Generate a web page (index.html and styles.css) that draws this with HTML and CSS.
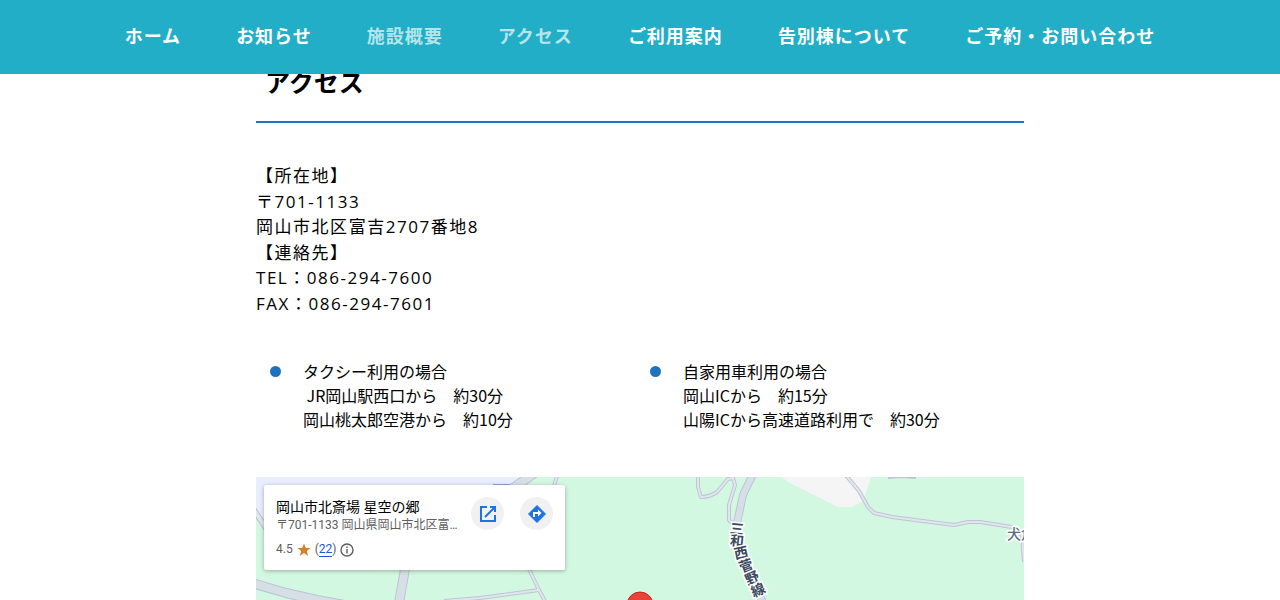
FILE: index.html
```html
<!DOCTYPE html>
<html lang="ja">
<head>
<meta charset="utf-8">
<meta name="viewport" content="width=device-width, initial-scale=1">
<title>アクセス</title>
<link rel="stylesheet" href="styles.css">
</head>
<body>
<header class="site-header">
  <nav class="nav">
    <a href="#home">ホーム</a>
    <a href="#news">お知らせ</a>
    <a href="#facility" class="is-dim">施設概要</a>
    <a href="#access" class="is-dim">アクセス</a>
    <a href="#guide">ご利用案内</a>
    <a href="#annex">告別棟について</a>
    <a href="#contact">ご予約・お問い合わせ</a>
  </nav>
</header>
<main class="page" id="access">
  <h2 class="title">アクセス</h2>
  <address class="contact">
    <p>【所在地】</p>
    <p>〒701-1133</p>
    <p>岡山市北区富吉2707番地8</p>
    <p>【連絡先】</p>
    <p>TEL：086-294-7600</p>
    <p>FAX：086-294-7601</p>
  </address>
  <ul class="routes">
    <li>タクシー利用の場合<br>&nbsp;JR岡山駅西口から　約30分<br>岡山桃太郎空港から　約10分</li>
    <li>自家用車利用の場合<br>岡山ICから　約15分<br>山陽ICから高速道路利用で　約30分</li>
  </ul>
  <section class="map" aria-label="地図">
    <svg class="map-art" viewBox="0 0 768 123" preserveAspectRatio="xMidYMin slice">
      <rect width="768" height="400" fill="#d3f8e2"/>
      <path d="M0 0H268L200 60H18L0 35Z" fill="#e8eeff"/>
      <path d="M526 0L532 5 556 17 582 30H596L606 25Q612 12 615 0Z" fill="#f5f5f5"/>
      <path d="M237 8H257" stroke="#8ea3d0" stroke-width="2"/>
      <g fill="none" stroke-linejoin="round">
        <path d="M-4 30L16 60" stroke="#bcc3d2" stroke-width="6"/>
        <path d="M-4 30L16 60" stroke="#e1e5ec" stroke-width="4"/>
        <path d="M-4 106L30 116 61 123 110 132M149 92L143 126M280 -5L250 16" stroke="#bcc3d6" stroke-width="10"/>
        <path d="M-4 106L30 116 61 123 110 132M149 92L143 126M280 -5L250 16" stroke="#d6dfe6" stroke-width="8"/>
        <path d="M498 -5L487 18 481 46 483 72 508 128" stroke="#bcc3d6" stroke-width="8"/>
        <path d="M498 -5L487 18 481 46 483 72 508 128" stroke="#d6dfe6" stroke-width="6"/>
        <path d="M302 -4L297 12M272 90L283 113 290 126M188 124L224 121 283 113M442 -4V10L445 20Q454 20 461 15L472 2 477 1 479 8 473 28V43L477 47M588 -4L603 14 612 30 618 36 636 40 698 48 712 45H724L756 50 766 58 768 85M632 0L644 -1 660 0" stroke="#bfc5d5" stroke-width="4"/>
        <path d="M302 -4L297 12M272 90L283 113 290 126M188 124L224 121 283 113M442 -4V10L445 20Q454 20 461 15L472 2 477 1 479 8 473 28V43L477 47M588 -4L603 14 612 30 618 36 636 40 698 48 712 45H724L756 50 766 58 768 85" stroke="#e2e5ee" stroke-width="2"/>
      </g>
      <g class="road-name">
        <text transform="translate(481 52) rotate(6)" text-anchor="middle" dy="5">三</text>
        <text transform="translate(481 64) rotate(6)" text-anchor="middle" dy="5">和</text>
        <text transform="translate(485 76) rotate(-12)" text-anchor="middle" dy="5">西</text>
        <text transform="translate(490 89) rotate(-20)" text-anchor="middle" dy="5">菅</text>
        <text transform="translate(496 101) rotate(-24)" text-anchor="middle" dy="5">野</text>
        <text transform="translate(502 113) rotate(-24)" text-anchor="middle" dy="5">線</text>
      </g>
      <text class="place" x="751" y="62">犬倉</text>
      <circle cx="384" cy="128" r="13" fill="#ea4335" stroke="#c5221f"/>
    </svg>
    <div class="card">
      <div class="card-text">
        <p class="place-name">岡山市北斎場 星空の郷</p>
        <p class="place-addr">〒701-1133 岡山県岡山市北区富吉2707番地8</p>
        <p class="rating"><span>4.5</span>
          <svg width="14" height="14" viewBox="0 0 14 14"><path d="M7 .5L8.8 5H13.6L9.8 8 11.2 13 7 10.1 2.8 13 4.2 8 .4 5H5.2Z" fill="#d5802c"/></svg>
          <span>(<a href="#reviews">22</a>)</span>
          <svg width="14" height="14" viewBox="0 0 14 14" fill="none" stroke="#5e5e5e" stroke-width="1.4"><circle cx="7" cy="7" r="6"/><path d="M7 6V10.5M7 3.5V5"/></svg>
        </p>
      </div>
      <button class="round" aria-label="拡大地図を表示"><svg width="18" height="18" viewBox="0 0 18 18" fill="none" stroke="#1a73e8" stroke-width="2"><path d="M8 2H2V16H16V10M11 2H16V7M16 2L6 12"/></svg></button>
      <button class="round" aria-label="ルート"><svg width="20" height="20" viewBox="0 0 20 20"><path d="M10 1.5L18.5 10 10 18.5 1.5 10Z" fill="#1a73e8" stroke="#1a73e8" stroke-linejoin="round"/><path d="M7 13V9H12" fill="none" stroke="#fff" stroke-width="2"/><path d="M11 5.5L14.5 9 11 12.5Z" fill="#fff"/></svg></button>
    </div>
  </section>
</main>
</body>
</html>
```
FILE: styles.css
```css
* { box-sizing: border-box; }
body {
  margin: 0;
  height: 100vh;
  overflow: hidden;
  color: #000;
  background: #fff;
  font-family: "Open Sans", "Noto Sans CJK JP", sans-serif;
}
p, h2, ul { margin: 0; padding: 0; }
.site-header {
  position: fixed;
  inset: 0 0 auto;
  z-index: 2;
  background: #21aec6;
}
.nav {
  display: flex;
  justify-content: center;
  gap: 55px;
  padding: 23px 0 25px;
}
.nav a {
  color: #fff;
  font-size: 18px;
  font-weight: 700;
  line-height: 26px;
  letter-spacing: 1px;
  text-decoration: none;
  white-space: nowrap;
}
.nav .is-dim { color: #b5e4eb; }
.page {
  display: flex;
  flex-direction: column;
  width: 60%;
  height: 100%;
  margin: 0 auto;
  padding-top: 65px;
}
.title {
  padding: 0 9px 21px;
  border-bottom: 2px solid #1e73be;
  font-size: 25px;
  line-height: 35px;
}
.contact {
  padding-top: 40px;
  font-size: 17px;
  font-style: normal;
  line-height: 1.5;
  letter-spacing: 0.09em;
}
.routes {
  display: grid;
  grid-template-columns: 1fr 1fr;
  margin-right: 8px;
  padding: 43px 0 46px;
  list-style: none;
  font-family: "Noto Sans CJK JP", sans-serif;
  font-size: 16px;
  line-height: 24px;
}
.routes li {
  position: relative;
  padding-left: 47px;
}
.routes li::before {
  content: "";
  position: absolute;
  top: 7px;
  left: 14px;
  width: 11px;
  height: 11px;
  border-radius: 50%;
  background: #1e73be;
}
.map {
  position: relative;
  flex: 1;
  min-height: 0;
  overflow: hidden;
}
.map-art {
  display: block;
  width: 100%;
  height: 100%;
}
.road-name {
  fill: #3c4a60;
  font-size: 14px;
  font-weight: 700;
  stroke: #fff;
  stroke-width: 3px;
  paint-order: stroke;
}
.place {
  fill: #5b6b7b;
  font-size: 14px;
  font-weight: 500;
  stroke: #fff;
  stroke-width: 3px;
  paint-order: stroke;
}
.card {
  position: absolute;
  top: 8px;
  left: 8px;
  display: flex;
  align-items: flex-start;
  gap: 16px;
  padding: 12px;
  background: #fff;
  border-radius: 2px;
  box-shadow: 0 1px 4px rgba(0, 0, 0, 0.3);
  font-family: Roboto, "Noto Sans CJK JP", sans-serif;
}
.card-text {
  width: 183px;
  margin-right: -4px;
  color: #5e5e5e;
  font-size: 12px;
  line-height: 17px;
}
.place-name {
  color: #000;
  font-size: 14px;
  line-height: 20px;
}
.place-addr {
  overflow: hidden;
  text-overflow: ellipsis;
  white-space: nowrap;
}
.rating {
  display: flex;
  align-items: center;
  gap: 4px;
  padding-top: 7px;
}
.rating a {
  color: #1a56db;
  text-decoration: none;
  border-bottom: 1px solid #1a56db;
}
.round {
  display: grid;
  place-items: center;
  width: 33px;
  height: 33px;
  padding: 0;
  border: 0;
  border-radius: 50%;
  background: #f1f1f1;
}
```
